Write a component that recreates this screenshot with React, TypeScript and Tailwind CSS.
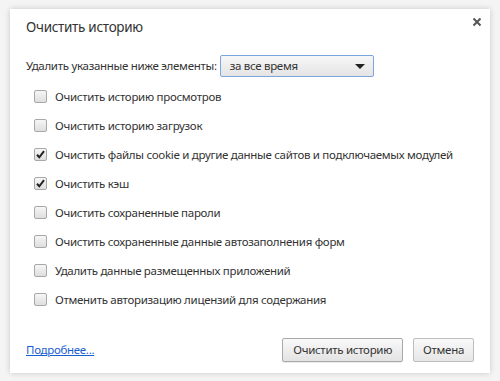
import React, { useState } from "react";

const items = [
  { label: "Очистить историю просмотров", checked: false },
  { label: "Очистить историю загрузок", checked: false },
  {
    label: "Очистить файлы cookie и другие данные сайтов и подключаемых модулей",
    checked: true,
  },
  { label: "Очистить кэш", checked: true },
  { label: "Очистить сохраненные пароли", checked: false },
  { label: "Очистить сохраненные данные автозаполнения форм", checked: false },
  { label: "Удалить данные размещенных приложений", checked: false },
  { label: "Отменить авторизацию лицензий для содержания", checked: false },
];

function CheckBox({ checked, onClick }: { checked: boolean; onClick: () => void }) {
  return (
    <span
      onClick={onClick}
      className="relative flex h-[13px] w-[13px] shrink-0 items-center justify-center rounded-[2px] border border-[#a8a8a8] bg-gradient-to-b from-[#f6f6f6] to-[#dedede]"
    >
      {checked && (
        <svg width="11" height="11" viewBox="0 0 11 11">
          <path d="M2 5.8 L4.3 8.3 L9 2.2" fill="none" stroke="#222" strokeWidth="2" />
        </svg>
      )}
    </span>
  );
}

function App() {
  const [checks, setChecks] = useState(items.map((i) => i.checked));

  return (
    <div
      className="h-[381px] w-[500px] bg-[#f4f4f4] pl-[10px] pt-[9px] text-[11.5px] tracking-[-0.3px] text-[#333]"
      style={{ fontFamily: '"Segoe UI", "Noto Sans", sans-serif' }}
    >
      <div className="relative flex h-[364px] w-[480px] flex-col bg-white shadow-[0_0_6px_rgba(0,0,0,0.18)]">
        <button className="absolute right-[8px] top-[8px] text-[#555]">
          <svg width="10" height="10" viewBox="0 0 10 10">
            <path d="M1.5 1.5 L8.5 8.5 M8.5 1.5 L1.5 8.5" stroke="#555" strokeWidth="2" />
          </svg>
        </button>

        <div className="pl-[16px] pt-[8px] text-[13.5px] leading-[20px] tracking-[-0.3px] text-[#333]">
          Очистить историю
        </div>

        <div className="mt-[18px] flex items-center whitespace-nowrap pl-[16px]">
          <span className="mr-[3px]">Удалить указанные ниже элементы:</span>
          <div className="flex h-[22px] w-[154px] items-center justify-between rounded-[2px] border border-[#7ba6dd] bg-gradient-to-b from-[#f7f7f7] to-[#e4e4e4] pl-[9px] pr-[8px]">
            <span>за все время</span>
            <span className="h-0 w-0 border-x-[5px] border-t-[5px] border-x-transparent border-t-[#222]" />
          </div>
        </div>

        <div className="mt-[5px] flex flex-col pl-[24px]">
          {items.map((item, i) => (
            <label key={i} className="flex h-[29px] items-center gap-[8px] whitespace-nowrap">
              <CheckBox
                checked={checks[i]}
                onClick={() => setChecks(checks.map((c, j) => (j === i ? !c : c)))}
              />
              <span>{item.label}</span>
            </label>
          ))}
        </div>

        <div className="mt-auto flex items-center justify-between pb-[11px] pl-[16px] pr-[16px]">
          <a href="#" className="text-[#1a5fd0] underline">
            Подробнее...
          </a>
          <div className="flex gap-[10px]">
            <button className="h-[24px] rounded-[2px] border border-[#a9a9a9] bg-gradient-to-b from-[#f9f9f9] to-[#e3e3e3] px-[10px] shadow-[0_1px_0_rgba(0,0,0,0.08)]">
              Очистить историю
            </button>
            <button className="h-[24px] rounded-[2px] border border-[#bdbdbd] bg-gradient-to-b from-[#f9f9f9] to-[#e6e6e6] px-[9px]">
              Отмена
            </button>
          </div>
        </div>
      </div>
    </div>
  );
}

export default App;
